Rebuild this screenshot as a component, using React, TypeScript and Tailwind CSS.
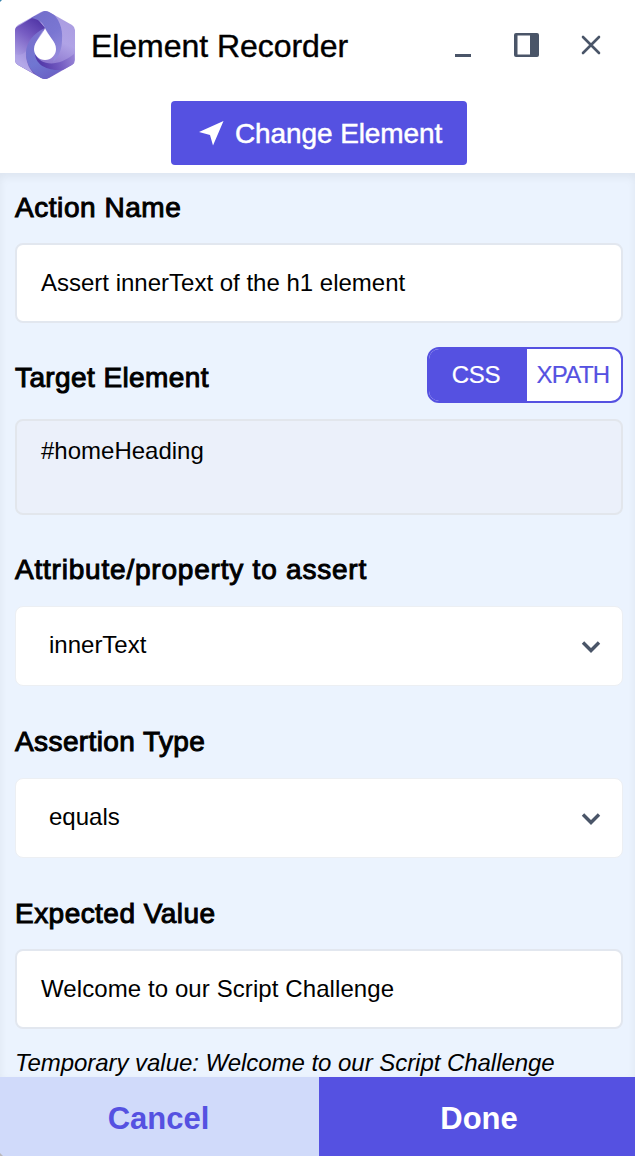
import type { ReactNode } from "react";

function Logo() {
  return (
    <svg width="60" height="68" viewBox="0 0 60 68" className="shrink-0">
      <defs>
        <clipPath id="hex">
          <path d="M26 1Q30 -1 34 1L57 14Q60 16 60 19V49Q60 52 57 54L34 67Q30 69 26 67L3 54Q0 52 0 49V19Q0 16 3 14Z" />
        </clipPath>
        <linearGradient id="right" x1=".8" y1="0" x2=".4" y2="1">
          <stop offset="0" stopColor="#a99be0" />
          <stop offset=".4" stopColor="#b0a3e6" />
          <stop offset=".75" stopColor="#8c77cf" />
          <stop offset="1" stopColor="#6a50b8" />
        </linearGradient>
        <linearGradient id="left" gradientUnits="userSpaceOnUse" x1="28" y1="14" x2="3" y2="50">
          <stop offset="0" stopColor="#5439a9" />
          <stop offset=".4" stopColor="#775dc3" />
          <stop offset="1" stopColor="#b3a8e8" />
        </linearGradient>
        <linearGradient id="top" gradientUnits="userSpaceOnUse" x1="24" y1="4" x2="52" y2="40">
          <stop offset="0" stopColor="#7470cc" />
          <stop offset=".5" stopColor="#7a76d2" />
          <stop offset="1" stopColor="#958bdc" />
        </linearGradient>
        <linearGradient id="bottom" gradientUnits="userSpaceOnUse" x1="16" y1="22" x2="38" y2="66">
          <stop offset="0" stopColor="#7a70cd" />
          <stop offset=".6" stopColor="#7076d2" />
          <stop offset="1" stopColor="#6a61c4" />
        </linearGradient>
        <linearGradient id="fold" gradientUnits="userSpaceOnUse" x1="26" y1="52" x2="60" y2="42">
          <stop offset="0" stopColor="#543aaa" />
          <stop offset=".5" stopColor="#735bc1" />
          <stop offset="1" stopColor="#9b88d8" />
        </linearGradient>
      </defs>
      <g clipPath="url(#hex)">
        <path d="M0 0H60V68H0Z" fill="url(#right)" />
        <path d="M0 17L20 5L31 18C18 24 10 34 11 46Q12 55 18 62L0 53Z" fill="url(#left)" />
        <path d="M0 51C3 54 10 58 19 63C14 57 10 49 11 40C9 43 4 45 0 43Z" fill="#b4a8e8" opacity=".4" />
        <path d="M16 7L29 0H35C44 7 48 17 47 29C47 38 44 46 38 51C42 43 42 33 36 27L30 17C28 11 23 8 16 7Z" fill="url(#top)" />
        <path d="M30 17C19 22 11 31 11 42C11 54 18 64 30 69L50 57C32 57 20 49 20 38C20 29 26 23 30 17Z" fill="url(#bottom)" />
        <path d="M20 43C25 54 42 57 59 43V53L48 59C34 60 21 55 20 43Z" fill="url(#fold)" />
      </g>
      <path d="M30 17C32 24 41 30 41 38A11 11 0 0 1 19 38C19 30 28 24 30 17Z" fill="#fff" />
    </svg>
  );
}

function Heading({ children, tracking }: { children: ReactNode; tracking: string }) {
  return (
    <h2 className={`${tracking} text-[28px] leading-10 whitespace-nowrap [-webkit-text-stroke:1px_#000]`}>
      {children}
    </h2>
  );
}

function TextBox({ children }: { children: ReactNode }) {
  return (
    <div className="flex h-20 items-center rounded-lg border-2 border-[#e2e7ef] bg-white px-6 text-2xl whitespace-nowrap">
      {children}
    </div>
  );
}

function SelectBox({ children }: { children: ReactNode }) {
  return (
    <div className="flex h-20 items-center justify-between rounded-lg border border-[#eceff3] bg-white pr-[21px] pl-[33px] text-2xl">
      <span className="-mt-0.5">{children}</span>
      <svg width="20" height="14" viewBox="0 0 20 14" fill="none" stroke="#4a5568" strokeWidth="3.400" className="mt-0.5">
        <path d="M2 2.500L10 10.500L18 2.500" />
      </svg>
    </div>
  );
}

export default function App() {
  return (
    <div className="relative flex h-[1156px] w-[635px] flex-col overflow-hidden bg-white font-['Liberation_Sans',Arial,sans-serif] text-black">
      <header className="h-[173px] shrink-0">
        <div className="flex h-[101px] items-start pt-[11px] pl-[15px]">
          <Logo />
          <h1 className="ml-4 w-[364px] text-[32px] leading-[70px] tracking-[-0.05px] whitespace-nowrap [-webkit-text-stroke:0.4px_#000]">Element Recorder</h1>
          <svg width="148" height="28" viewBox="0 0 148 28" className="mt-5" fill="none">
            <path d="M0 24.500H16" stroke="#4a5568" strokeWidth="3" />
            <path fillRule="evenodd" d="M61 2H82Q84 2 84 4V24Q84 26 82 26H61Q59 26 59 24V4Q59 2 61 2ZM62.500 4.500V23.500H75V4.500Z" fill="#4a5568" />
            <path d="M128 6L144 22M144 6L128 22" stroke="#4a5568" strokeWidth="2.600" strokeLinecap="round" />
          </svg>
        </div>
        <button className="ml-[171px] flex h-16 w-[296px] items-center rounded bg-[#5551e1] pl-[28px] text-[28px] text-white">
          <svg width="25" height="25" viewBox="0 0 25 25" fill="#fff">
            <path d="M0 11L24.500 0L14 24.500L11 14Z" />
          </svg>
          <span className="ml-[11px] pt-px tracking-[-0.1px] whitespace-nowrap [-webkit-text-stroke:0.5px_#fff]">Change Element</span>
        </button>
      </header>

      <main className="flex h-[904px] shrink-0 flex-col overflow-hidden bg-[#ebf3fe] pt-[15px] pr-3 pl-[15px] shadow-[inset_0_4px_8px_#0000000f]">
        <Heading tracking="tracking-[0.55px]">Action Name</Heading>
        <div className="mt-[15px]">
          <TextBox>Assert innerText of the h1 element</TextBox>
        </div>

        <div className="mt-6 flex h-14 items-center justify-between">
          <div className="mt-1.5"><Heading tracking="tracking-[0.4px]">Target Element</Heading></div>
          <div className="flex h-14 w-[196px] overflow-hidden rounded-xl border-2 border-[#5551e1] bg-white text-2xl">
            <button className="w-[98px] bg-[#5551e1] pr-1 tracking-[-0.2px] text-white [-webkit-text-stroke:0.2px_#fff]">CSS</button>
            <button className="flex-1 pr-0.5 tracking-[-0.7px] text-[#5551e1] [-webkit-text-stroke:0.2px_#5551e1]">XPATH</button>
          </div>
        </div>
        <div className="mt-4 h-24 shrink-0 rounded-lg border-2 border-[#e2e6ec] bg-[#ebf0fa] px-6 pt-[14px] text-2xl">#homeHeading</div>

        <div className="mt-[35px]"><Heading tracking="tracking-[0.79px]">Attribute/property to assert</Heading></div>
        <div className="mt-4"><SelectBox>innerText</SelectBox></div>

        <div className="mt-[36px]"><Heading tracking="tracking-[0.4px]">Assertion Type</Heading></div>
        <div className="mt-4"><SelectBox>equals</SelectBox></div>

        <div className="mt-[36px]"><Heading tracking="tracking-[0.46px]">Expected Value</Heading></div>
        <div className="mt-[15px]"><TextBox><span className="tracking-[0.09px]">Welcome to our Script Challenge</span></TextBox></div>

        <p className="mt-[18px] text-2xl tracking-[-0.04px] whitespace-nowrap italic">Temporary value: Welcome to our Script Challenge</p>
      </main>

      <footer className="flex h-[79px] shrink-0 text-[31px] font-bold">
        <button className="w-[319px] bg-[#d0dafa] pt-1.5 pr-0.5 text-[#5551e1]">Cancel</button>
        <button className="flex-1 bg-[#5551e1] pt-1.5 pl-1 text-white">Done</button>
      </footer>
      <span className="absolute bottom-0 left-0 size-[3px] bg-[#b9b8bb] [clip-path:polygon(0_0,100%_100%,0_100%)]" />
      <span className="absolute top-0 left-0 size-[2px] bg-[#3c86ad] [clip-path:polygon(0_0,100%_0,0_100%)]" />
    </div>
  );
}
